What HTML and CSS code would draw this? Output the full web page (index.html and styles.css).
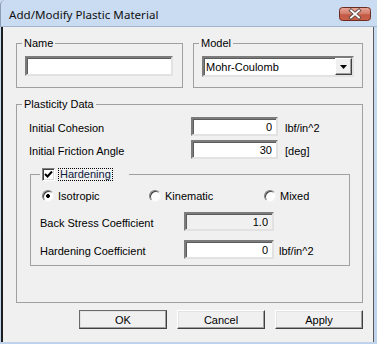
FILE: index.html
```html
<!DOCTYPE html>
<html lang="en">
<head>
    <meta charset="UTF-8">
    <title>Add/Modify Plastic Material</title>
    <link rel="stylesheet" href="styles.css">
</head>
<body>

    <div class="window">
        <div class="titlebar">
            <span class="title">Add/Modify Plastic Material</span>
            <span class="close">
                <svg width="32" height="14" viewBox="0 0 32 14">
                    <defs>
                        <linearGradient id="red" x1="0" y1="0" x2="0" y2="1">
                            <stop offset="0" stop-color="#e9a99a"/>
                            <stop offset="0.5" stop-color="#d27a67"/>
                            <stop offset="0.55" stop-color="#c35a45"/>
                            <stop offset="1" stop-color="#c8604a"/>
                        </linearGradient>
                    </defs>
                    <rect x="0.5" y="0.5" width="31" height="13" rx="3" fill="url(#red)" stroke="#6e2b20"/>
                    <path d="M12 3.5 L20 10.5 M20 3.5 L12 10.5" stroke="#5a4a48" stroke-width="3.6" stroke-linecap="square"/>
                    <path d="M12 3.5 L20 10.5 M20 3.5 L12 10.5" stroke="#ffffff" stroke-width="1.8" stroke-linecap="square"/>
                </svg>
            </span>
        </div>

        <div class="client">
            <div class="top-row">
                <fieldset class="group name-group">
                    <legend>Name</legend>
                    <input type="text" class="field name-field">
                </fieldset>
                <fieldset class="group model-group">
                    <legend>Model</legend>
                    <div class="combo">
                        <span class="combo-text">Mohr-Coulomb</span>
                        <span class="combo-btn">
                            <svg width="7" height="4" viewBox="0 0 7 4"><path d="M0 0 H7 L3.5 4 Z" fill="#000"/></svg>
                        </span>
                    </div>
                </fieldset>
            </div>

            <fieldset class="group plasticity">
                <legend>Plasticity Data</legend>
                <div class="row">
                    <label>Initial Cohesion</label>
                    <input type="text" class="field num" value="0">
                    <span class="unit">lbf/in^2</span>
                </div>
                <div class="row">
                    <label>Initial Friction Angle</label>
                    <input type="text" class="field num" value="30">
                    <span class="unit">[deg]</span>
                </div>

                <fieldset class="group hardening">
                    <legend>
                        <span class="check">
                            <svg width="9" height="9" viewBox="0 0 9 9"><path d="M1 4 L3.5 6.5 L8 1.5" fill="none" stroke="#000" stroke-width="2"/></svg>
                        </span>
                        <span class="focus">Hardening</span>
                    </legend>
                    <div class="radios">
                        <div class="radio-item"><span class="radio on"></span>Isotropic</div>
                        <div class="radio-item"><span class="radio"></span>Kinematic</div>
                        <div class="radio-item"><span class="radio"></span>Mixed</div>
                    </div>
                    <div class="row hrow first">
                        <label>Back Stress Coefficient</label>
                        <input type="text" class="field num disabled" value="1.0" disabled>
                        <span class="unit"></span>
                    </div>
                    <div class="row hrow">
                        <label>Hardening Coefficient</label>
                        <input type="text" class="field num" value="0">
                        <span class="unit">lbf/in^2</span>
                    </div>
                </fieldset>
            </fieldset>

            <div class="buttons">
                <button class="btn default">OK</button>
                <button class="btn">Cancel</button>
                <button class="btn">Apply</button>
            </div>
        </div>
    </div>

</body>
</html>
```

FILE: styles.css
```css
body {
    margin: 0;
    font-family: "Liberation Sans", Arial, sans-serif;
    font-size: 11px;
    color: #000;
    background-color: #c4d8ef;
}

.window {
    width: 377px;
    height: 344px;
    display: flex;
    flex-direction: column;
    background: linear-gradient(#cadcf1, #bfd4ec);
}

.titlebar {
    height: 26px;
    display: flex;
    align-items: center;
    justify-content: space-between;
    padding: 0 6px 0 8px;
    border-left: 1px solid #8d9db2;
    border-bottom: 1px solid #a3b5cc;
    border-radius: 5px 5px 0 0;
}

.title {
    font-family: "Noto Sans", sans-serif;
    font-size: 11.6px;
    color: #111;
    padding-top: 2px;
}

.close {
    display: flex;
    margin-top: 2px;
}

.client {
    flex: 1;
    margin: 0 3px 2px 1px;
    padding: 10px 10px 0 13px;
    background-color: #f0f0f0;
    border-left: 2px solid #1e1e1e;
    border-right: 1px solid #5a5a5a;
}

/* group boxes */
.group {
    margin: 0;
    border: 1px solid #a0a0a0;
    min-width: 0;
}

.group legend {
    padding: 0 2px;
    line-height: 13px;
}

.top-row {
    display: flex;
    gap: 10px;
}

.name-group {
    width: 167px;
    box-sizing: border-box;
    padding: 6px 9px 10px 8px;
}

.model-group {
    width: 170px;
    box-sizing: border-box;
    padding: 6px 8px 10px 8px;
}

.name-group legend,
.model-group legend {
    margin-left: -3px;
}

/* sunken fields */
.field {
    box-sizing: border-box;
    height: 19px;
    margin: 0;
    padding: 0 4px;
    font-family: inherit;
    font-size: 11px;
    color: #000;
    background-color: #fff;
    border: 2px solid;
    border-color: #7c7c7c #e2e2e2 #e2e2e2 #7c7c7c;
    box-shadow: inset 1px 1px 0 #5c5c5c;
    outline: none;
}

.name-field {
    width: 100%;
    height: 20px;
}

.num {
    text-align: right;
}

.disabled {
    background-color: #f0f0f0;
    color: #000;
}

.combo {
    box-sizing: border-box;
    height: 21px;
    display: flex;
    align-items: center;
    background-color: #fff;
    border: 2px solid;
    border-color: #7c7c7c #e2e2e2 #e2e2e2 #7c7c7c;
    box-shadow: inset 1px 1px 0 #5c5c5c;
    padding-left: 2px;
}

.combo-text {
    flex: 1;
    padding-top: 1px;
}

.combo-btn {
    width: 17px;
    height: 17px;
    box-sizing: border-box;
    display: flex;
    align-items: center;
    justify-content: center;
    background-color: #f0f0f0;
    border: 1px solid;
    border-color: #fff #404040 #404040 #fff;
    box-shadow: inset -1px -1px 0 #a0a0a0;
}

/* plasticity data */
.plasticity {
    margin-top: 10px;
    padding: 6px 12px 36px 12px;
}

.plasticity > legend {
    margin-left: -7px;
}

.row {
    display: grid;
    grid-template-columns: 162px 87px auto;
    align-items: center;
    height: 19px;
    margin-bottom: 4px;
}

.row label {
    padding-top: 3px;
}

.unit {
    padding-left: 7px;
    padding-top: 2px;
}

.hardening {
    margin: 8px 0 0 1px;
    padding: 7px 9px 6px 9px;
}

.hardening legend {
    display: flex;
    align-items: center;
    height: 15px;
    padding: 0 16px 0 2px;
}

.check {
    width: 13px;
    height: 13px;
    box-sizing: border-box;
    display: flex;
    align-items: center;
    justify-content: center;
    background-color: #fff;
    border: 1px solid;
    border-color: #808080 #fff #fff #808080;
    box-shadow: inset 1px 1px 0 #404040, inset -1px -1px 0 #dcdcdc;
}

.focus {
    margin-left: 3px;
    padding: 0 1px;
    line-height: 11px;
    border: 1px dotted #000;
    color: #0d1a40;
}

.radios {
    display: grid;
    grid-template-columns: 107px 115px auto;
    height: 13px;
    align-items: center;
}

.radio-item {
    display: flex;
    align-items: center;
    gap: 4px;
    padding-left: 2px;
}

.radio {
    width: 12px;
    height: 12px;
    box-sizing: border-box;
    border-radius: 50%;
    border: 1px solid;
    border-color: #808080 #f5f5f5 #f5f5f5 #808080;
    box-shadow: inset 1px 1px 0 #404040;
    background-color: #fff;
}

.radio.on {
    background: radial-gradient(circle, #000 0 1.6px, #fff 2.2px);
}

.hrow {
    grid-template-columns: 144px 90px auto;
    margin-bottom: 9px;
}

.hrow.first {
    margin-top: 10px;
}

.hrow:last-child {
    margin-bottom: 0;
}

.hrow .unit {
    padding-left: 5px;
}

/* buttons */
.buttons {
    display: flex;
    justify-content: flex-end;
    gap: 10px;
    margin-top: 7px;
}

.btn {
    width: 88px;
    height: 19px;
    box-sizing: border-box;
    padding: 0;
    font-family: inherit;
    font-size: 11px;
    color: #000;
    background-color: #f0f0f0;
    border: 1px solid;
    border-color: #fff #404040 #404040 #fff;
    box-shadow: inset -1px -1px 0 #a0a0a0, inset 1px 1px 0 #e3e3e3;
}

.btn.default {
    border-color: #6a6a6a #404040 #404040 #6a6a6a;
}
```
